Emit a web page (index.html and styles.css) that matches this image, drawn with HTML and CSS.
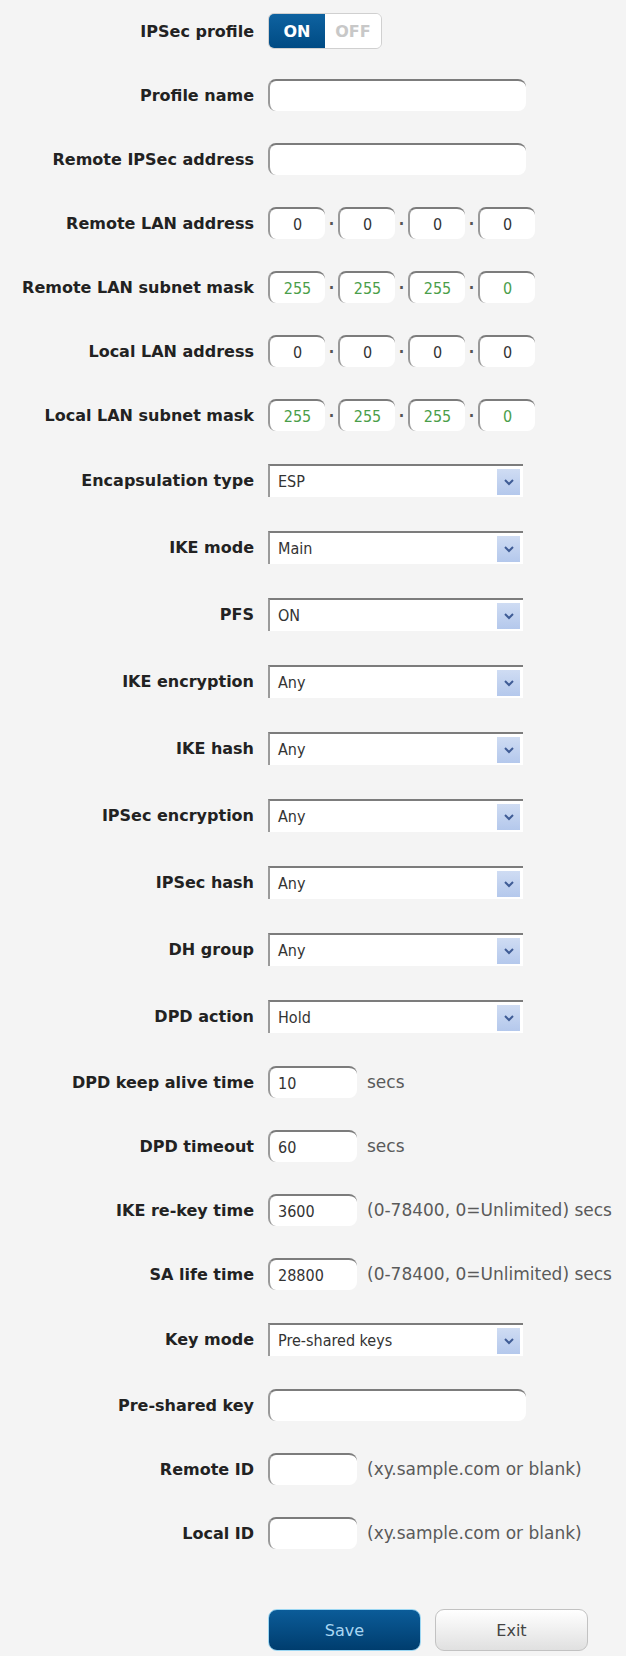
FILE: index.html
```html
<!DOCTYPE html>
<html lang="en">
  <head>
    <meta charset="utf-8" />
    <title>IPSec Profile Settings</title>
    <meta name="viewport" content="width=device-width,initial-scale=1" />
    <link rel="stylesheet" href="styles.css">
  </head>
  <body>
    <form class="f-form" action="#">
      <!-- Profile on/off -->
      <div class="f-row">
        <label class="f-row__label">IPSec profile</label>
        <div class="f-toggle">
          <span class="f-toggle__on">ON</span>
          <span class="f-toggle__off">OFF</span>
        </div>
      </div>
      <div class="f-row">
        <label class="f-row__label">Profile name</label>
        <input class="f-input" type="text" value="">
      </div>
      <div class="f-row">
        <label class="f-row__label">Remote IPSec address</label>
        <input class="f-input" type="text" value="">
      </div>

      <!-- Addresses as four octet boxes -->
      <div class="f-row">
        <label class="f-row__label">Remote LAN address</label>
        <div class="f-ip">
          <input class="f-input f-input--octet" type="text" value="0"><span class="f-ip__dot">&middot;</span>
          <input class="f-input f-input--octet" type="text" value="0"><span class="f-ip__dot">&middot;</span>
          <input class="f-input f-input--octet" type="text" value="0"><span class="f-ip__dot">&middot;</span>
          <input class="f-input f-input--octet" type="text" value="0">
        </div>
      </div>
      <div class="f-row">
        <label class="f-row__label">Remote LAN subnet mask</label>
        <div class="f-ip f-ip--mask">
          <input class="f-input f-input--octet" type="text" value="255"><span class="f-ip__dot">&middot;</span>
          <input class="f-input f-input--octet" type="text" value="255"><span class="f-ip__dot">&middot;</span>
          <input class="f-input f-input--octet" type="text" value="255"><span class="f-ip__dot">&middot;</span>
          <input class="f-input f-input--octet" type="text" value="0">
        </div>
      </div>
      <div class="f-row">
        <label class="f-row__label">Local LAN address</label>
        <div class="f-ip">
          <input class="f-input f-input--octet" type="text" value="0"><span class="f-ip__dot">&middot;</span>
          <input class="f-input f-input--octet" type="text" value="0"><span class="f-ip__dot">&middot;</span>
          <input class="f-input f-input--octet" type="text" value="0"><span class="f-ip__dot">&middot;</span>
          <input class="f-input f-input--octet" type="text" value="0">
        </div>
      </div>
      <div class="f-row">
        <label class="f-row__label">Local LAN subnet mask</label>
        <div class="f-ip f-ip--mask">
          <input class="f-input f-input--octet" type="text" value="255"><span class="f-ip__dot">&middot;</span>
          <input class="f-input f-input--octet" type="text" value="255"><span class="f-ip__dot">&middot;</span>
          <input class="f-input f-input--octet" type="text" value="255"><span class="f-ip__dot">&middot;</span>
          <input class="f-input f-input--octet" type="text" value="0">
        </div>
      </div>

      <!-- Drop-down settings -->
      <div class="f-row f-row--select">
        <label class="f-row__label">Encapsulation type</label>
        <div class="f-select"><span class="f-select__value">ESP</span><span class="f-select__arrow"><svg width="12" height="8" viewBox="0 0 12 8"><polyline points="2,2 6,6 10,2" /></svg></span></div>
      </div>
      <div class="f-row f-row--select">
        <label class="f-row__label">IKE mode</label>
        <div class="f-select"><span class="f-select__value">Main</span><span class="f-select__arrow"><svg width="12" height="8" viewBox="0 0 12 8"><polyline points="2,2 6,6 10,2" /></svg></span></div>
      </div>
      <div class="f-row f-row--select">
        <label class="f-row__label">PFS</label>
        <div class="f-select"><span class="f-select__value">ON</span><span class="f-select__arrow"><svg width="12" height="8" viewBox="0 0 12 8"><polyline points="2,2 6,6 10,2" /></svg></span></div>
      </div>
      <div class="f-row f-row--select">
        <label class="f-row__label">IKE encryption</label>
        <div class="f-select"><span class="f-select__value">Any</span><span class="f-select__arrow"><svg width="12" height="8" viewBox="0 0 12 8"><polyline points="2,2 6,6 10,2" /></svg></span></div>
      </div>
      <div class="f-row f-row--select">
        <label class="f-row__label">IKE hash</label>
        <div class="f-select"><span class="f-select__value">Any</span><span class="f-select__arrow"><svg width="12" height="8" viewBox="0 0 12 8"><polyline points="2,2 6,6 10,2" /></svg></span></div>
      </div>
      <div class="f-row f-row--select">
        <label class="f-row__label">IPSec encryption</label>
        <div class="f-select"><span class="f-select__value">Any</span><span class="f-select__arrow"><svg width="12" height="8" viewBox="0 0 12 8"><polyline points="2,2 6,6 10,2" /></svg></span></div>
      </div>
      <div class="f-row f-row--select">
        <label class="f-row__label">IPSec hash</label>
        <div class="f-select"><span class="f-select__value">Any</span><span class="f-select__arrow"><svg width="12" height="8" viewBox="0 0 12 8"><polyline points="2,2 6,6 10,2" /></svg></span></div>
      </div>
      <div class="f-row f-row--select">
        <label class="f-row__label">DH group</label>
        <div class="f-select"><span class="f-select__value">Any</span><span class="f-select__arrow"><svg width="12" height="8" viewBox="0 0 12 8"><polyline points="2,2 6,6 10,2" /></svg></span></div>
      </div>
      <div class="f-row f-row--select">
        <label class="f-row__label">DPD action</label>
        <div class="f-select"><span class="f-select__value">Hold</span><span class="f-select__arrow"><svg width="12" height="8" viewBox="0 0 12 8"><polyline points="2,2 6,6 10,2" /></svg></span></div>
      </div>

      <!-- Timers -->
      <div class="f-row">
        <label class="f-row__label">DPD keep alive time</label>
        <input class="f-input f-input--short" type="text" value="10">
        <span class="f-hint">secs</span>
      </div>
      <div class="f-row">
        <label class="f-row__label">DPD timeout</label>
        <input class="f-input f-input--short" type="text" value="60">
        <span class="f-hint">secs</span>
      </div>
      <div class="f-row">
        <label class="f-row__label">IKE re-key time</label>
        <input class="f-input f-input--short" type="text" value="3600">
        <span class="f-hint">(0-78400, 0=Unlimited) secs</span>
      </div>
      <div class="f-row">
        <label class="f-row__label">SA life time</label>
        <input class="f-input f-input--short" type="text" value="28800">
        <span class="f-hint">(0-78400, 0=Unlimited) secs</span>
      </div>

      <!-- Keys and IDs -->
      <div class="f-row f-row--select">
        <label class="f-row__label">Key mode</label>
        <div class="f-select"><span class="f-select__value">Pre-shared keys</span><span class="f-select__arrow"><svg width="12" height="8" viewBox="0 0 12 8"><polyline points="2,2 6,6 10,2" /></svg></span></div>
      </div>
      <div class="f-row">
        <label class="f-row__label">Pre-shared key</label>
        <input class="f-input" type="password" value="">
      </div>
      <div class="f-row">
        <label class="f-row__label">Remote ID</label>
        <input class="f-input f-input--short" type="text" value="">
        <span class="f-hint">(xy.sample.com or blank)</span>
      </div>
      <div class="f-row">
        <label class="f-row__label">Local ID</label>
        <input class="f-input f-input--short" type="text" value="">
        <span class="f-hint">(xy.sample.com or blank)</span>
      </div>

      <div class="f-actions">
        <button type="submit" class="f-btn f-btn--primary">Save</button>
        <button type="button" class="f-btn">Exit</button>
      </div>
    </form>
  </body>
</html>
```

FILE: styles.css
```css
/* Base */
html { box-sizing: border-box; }
*, *:before, *:after { box-sizing: inherit; }
body {
  margin: 0;
  background-color: #f4f4f4;
  color: #222;
  font-family: "DejaVu Sans Condensed", "DejaVu Sans", Tahoma, sans-serif;
}
/* Form rows */
.f-form {
  margin-top: -1px;
}
.f-row {
  display: flex;
  align-items: center;
  height: 64px;
}
.f-row--select { height: 67px; }
.f-row__label {
  width: 254px;
  flex-shrink: 0;
  margin-right: 14px;
  text-align: right;
  font-family: "DejaVu Sans", Tahoma, sans-serif;
  font-weight: bold;
  font-size: 16px;
  color: #222;
}
/* Inputs */
.f-input {
  appearance: none;
  width: 258px;
  height: 32px;
  margin: 0;
  padding: 0 8px;
  background: #fff;
  border: none;
  border-top: 2px solid #7c7c7c;
  border-left: 2px solid #9a9a9a;
  border-radius: 8px;
  font-family: inherit;
  font-size: 16px;
  color: #333;
  outline: none;
}
.f-input--short { width: 89px; }
.f-input--octet {
  width: 57px;
  text-align: center;
  padding: 0;
}
.f-ip {
  display: flex;
  align-items: center;
}
.f-ip__dot {
  width: 13px;
  text-align: center;
  font-weight: bold;
  color: #555;
}
.f-ip--mask .f-input { color: #4a9e4a; }
.f-hint {
  margin-left: 10px;
  font-family: "DejaVu Sans", Verdana, sans-serif;
  font-size: 17px;
  color: #5a5a5a;
}
/* Toggle */
.f-toggle {
  display: flex;
  width: 114px;
  height: 36px;
  border: 1px solid #d0d0d0;
  border-radius: 6px;
  overflow: hidden;
  font-family: "DejaVu Sans", Tahoma, sans-serif;
  font-weight: bold;
  font-size: 16px;
}
.f-toggle__on,
.f-toggle__off {
  flex: 1;
  display: flex;
  align-items: center;
  justify-content: center;
}
.f-toggle__on {
  background: linear-gradient(#0e62a0, #004b84);
  color: #fff;
}
.f-toggle__off {
  background: #fff;
  color: #c8c8c8;
}
/* Select */
.f-select {
  display: flex;
  align-items: center;
  width: 255px;
  height: 33px;
  padding: 0 3px 0 8px;
  background: #fff;
  border-top: 2px solid #7c7c7c;
  border-left: 2px solid #9a9a9a;
  font-size: 16px;
  color: #333;
}
.f-select__value { flex: 1; }
.f-select__arrow {
  display: flex;
  align-items: center;
  justify-content: center;
  width: 23px;
  height: 26px;
  background: linear-gradient(#cfdcf3, #b4c8ec);
}
.f-select__arrow polyline {
  fill: none;
  stroke: #3f5c96;
  stroke-width: 2;
}
/* Buttons */
.f-actions {
  display: flex;
  gap: 14px;
  margin-top: 44px;
  padding-left: 268px;
}
.f-btn {
  width: 153px;
  height: 42px;
  border: 1px solid #c2c2c2;
  border-radius: 9px;
  background: linear-gradient(#ffffff, #e0e0e0);
  font-family: "DejaVu Sans", Verdana, sans-serif;
  font-size: 16px;
  color: #444;
}
.f-btn--primary {
  border-color: #9bd6f2;
  background: linear-gradient(#0b5c99, #003d6e);
  color: #a9d6f2;
}
```
